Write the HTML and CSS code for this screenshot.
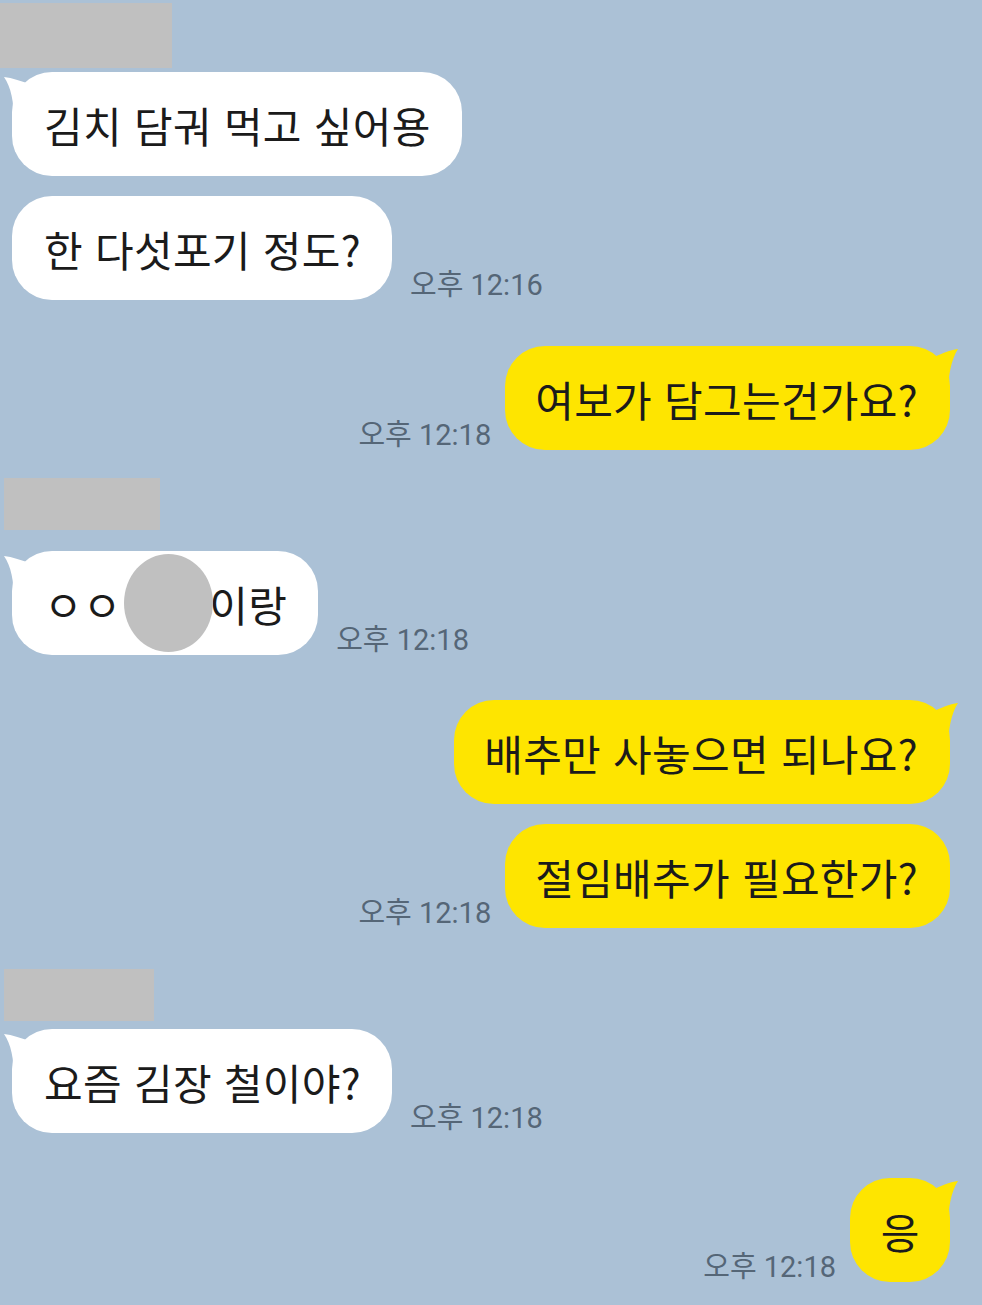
FILE: index.html
```html
<!DOCTYPE html>
<html lang="ko">
<head>
<meta charset="utf-8">
<link rel="stylesheet" href="styles.css">
</head>
<body>
<div class="chat">
  <div class="name name-1"></div>
  <div class="row left gap-4">
    <div class="bubble white"><svg class="tail tail-l" width="30" height="50" viewBox="0 0 30 50"><path d="M2 5 C10 6 20 9 30 13 L30 50 L12 50 C12 30 9 15 2 5 Z" fill="#fff"/></svg>김치 담궈 먹고 싶어용</div>
  </div>
  <div class="row left gap-20">
    <div class="bubble white">한 다섯포기 정도?</div>
    <span class="time t-left">오후 12:16</span>
  </div>

  <div class="row right gap-46">
    <span class="time t-right">오후 12:18</span>
    <div class="bubble yellow"><svg class="tail tail-r" width="30" height="50" viewBox="0 0 30 50"><path d="M28 3 C20 4 10 8 0 13 L0 50 L18 50 C18 30 21 14 28 3 Z" fill="#fee500"/></svg>여보가 담그는건가요?</div>
  </div>

  <div class="name name-2"></div>
  <div class="row left gap-21">
    <div class="bubble white"><svg class="tail tail-l" width="30" height="50" viewBox="0 0 30 50"><path d="M2 5 C10 6 20 9 30 13 L30 50 L12 50 C12 30 9 15 2 5 Z" fill="#fff"/></svg><span class="jamo">ㅇㅇ</span><span class="blur-dot"></span>이랑</div>
    <span class="time t-left">오후 12:18</span>
  </div>

  <div class="row right gap-45">
    <div class="bubble yellow"><svg class="tail tail-r" width="30" height="50" viewBox="0 0 30 50"><path d="M28 3 C20 4 10 8 0 13 L0 50 L18 50 C18 30 21 14 28 3 Z" fill="#fee500"/></svg>배추만 사놓으면 되나요?</div>
  </div>
  <div class="row right gap-20">
    <span class="time t-right">오후 12:18</span>
    <div class="bubble yellow">절임배추가 필요한가?</div>
  </div>

  <div class="name name-3"></div>
  <div class="row left gap-8">
    <div class="bubble white"><svg class="tail tail-l" width="30" height="50" viewBox="0 0 30 50"><path d="M2 5 C10 6 20 9 30 13 L30 50 L12 50 C12 30 9 15 2 5 Z" fill="#fff"/></svg>요즘 김장 철이야?</div>
    <span class="time t-left">오후 12:18</span>
  </div>

  <div class="row right gap-45">
    <span class="time t-right">오후 12:18</span>
    <div class="bubble yellow short"><svg class="tail tail-r" width="30" height="50" viewBox="0 0 30 50"><path d="M28 3 C20 4 10 8 0 13 L0 50 L18 50 C18 30 21 14 28 3 Z" fill="#fee500"/></svg>응</div>
  </div>
</div>
</body>
</html>
```

FILE: styles.css
```css
* { box-sizing: border-box; }
html, body {
  margin: 0;
  padding: 0;
  background: #abc1d6;
}
body {
  width: 982px;
  height: 1305px;
  overflow: hidden;
  font-family: "Noto Sans CJK KR", "Noto Sans", sans-serif;
}
.chat {
  display: flex;
  flex-direction: column;
  padding-top: 3px;
}
.name {
  background: #c0c0c0;
}
.name-1 { width: 172px; height: 65px; }
.name-2 { width: 156px; height: 52px; margin-left: 4px; margin-top: 28px; }
.name-3 { width: 150px; height: 52px; margin-left: 4px; margin-top: 41px; }

.row {
  display: flex;
  align-items: flex-end;
}
.row.left { padding-left: 12px; }
.row.right { justify-content: flex-end; padding-right: 32px; }
.gap-4 { margin-top: 4px; }
.gap-8 { margin-top: 8px; }
.gap-20 { margin-top: 20px; }
.gap-21 { margin-top: 21px; }
.gap-45 { margin-top: 45px; }
.gap-46 { margin-top: 46px; }

.bubble {
  position: relative;
  height: 104px;
  border-radius: 40px;
  padding: 0 31px 0 32px;
  display: flex;
  align-items: center;
  font-size: 42px;
  color: #1b1b1b;
  white-space: nowrap;
  letter-spacing: 0.3px;
}
.bubble.white { background: #ffffff; }
.bubble.yellow { background: #fee500; padding: 0 32px 0 30px; }
.bubble.short { width: 100px; padding: 0; justify-content: center; letter-spacing: 0; }

.tail { position: absolute; top: 0; }
.tail-l { left: -10px; }
.tail-r { right: -10px; }

.jamo { letter-spacing: 0; }
.blur-dot {
  display: inline-block;
  width: 89px;
  height: 98px;
  border-radius: 50%;
  background: #c0c0c0;
  margin: 0 -4px 0 3px;
  position: relative;
}

.time {
  font-family: "Roboto", "Noto Sans CJK KR", sans-serif;
  font-size: 29px;
  color: #556677;
  line-height: 1;
  white-space: nowrap;
}
.t-left { margin-left: 18px; }
.t-right { margin-right: 14px; }
```
